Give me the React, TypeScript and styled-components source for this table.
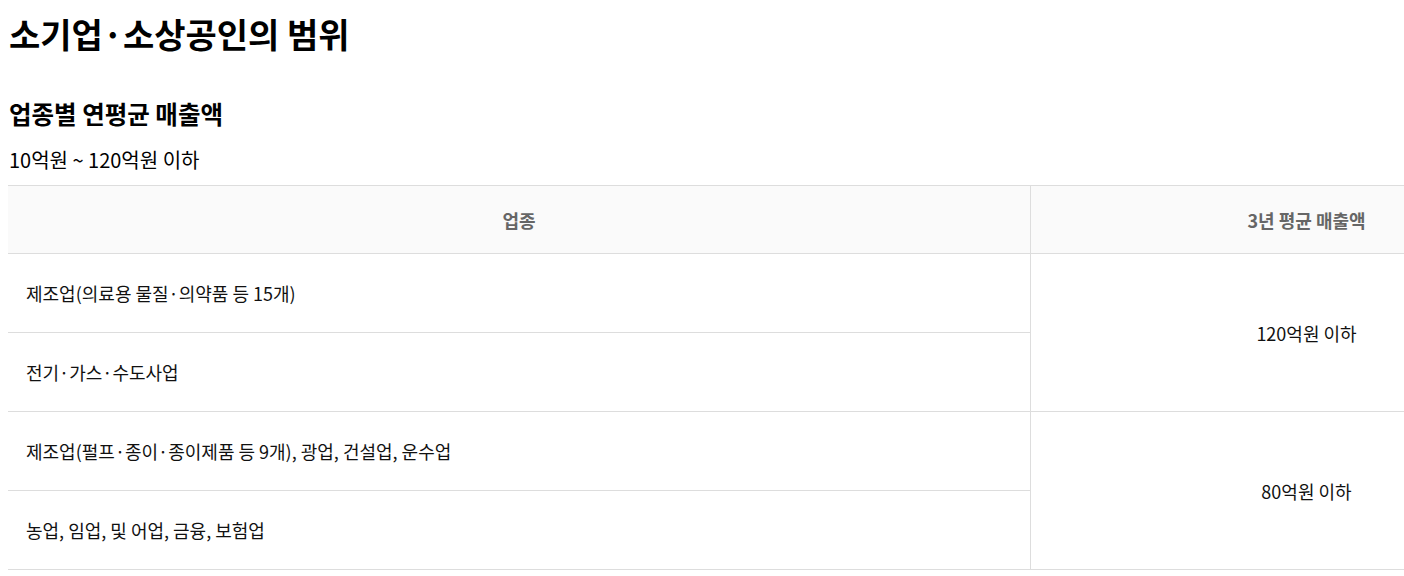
import React from "react";
import styled, { createGlobalStyle } from "styled-components";

const Global = createGlobalStyle`
  body {
    margin: 8px 0 8px 8px;
    font-family: "Noto Sans CJK KR", "Noto Sans", sans-serif;
    color: #000;
    background: #fff;
  }
`;

const Page = styled.div`
  overflow: hidden;
`;

const Title = styled.h1`
  margin: 2px 0 0 1px;
  font-size: 34px;
  line-height: 48px;
  font-weight: 700;
`;

const SubTitle = styled.h2`
  margin: 39px 0 0 1px;
  font-size: 24.5px;
  line-height: 33px;
  font-weight: 700;
`;

const Lead = styled.p`
  margin: 15px 0 0 1px;
  font-size: 20px;
  line-height: 30px;
`;

const TableWrap = styled.div`
  margin-top: 10px;
  overflow: hidden;
`;

const Table = styled.table`
  width: 1574px;
  border-collapse: collapse;
  table-layout: fixed;
  border-top: 1px solid #ddd;
`;

const Th = styled.th<{ $w?: number }>`
  width: ${(p) => (p.$w ? `${p.$w}px` : "auto")};
  height: 67px;
  padding: 0;
  background: #fafafa;
  color: #666;
  font-size: 18px;
  font-weight: 700;
  text-align: center;
  border-bottom: 1px solid #ddd;
  border-left: 1px solid #ddd;
  &:first-child { border-left: none; }
`;

const Td = styled.td<{ $center?: boolean }>`
  height: 78px;
  padding: ${(p) => (p.$center ? "0" : "0 0 0 18px")};
  font-size: 18px;
  color: #111;
  text-align: ${(p) => (p.$center ? "center" : "left")};
  border-bottom: 1px solid #ddd;
  border-left: 1px solid #ddd;
  &:first-child { border-left: none; }
`;

const rows = [
  { items: ["제조업(의료용 물질·의약품 등 15개)", "전기·가스·수도사업"], value: "120억원 이하" },
  { items: ["제조업(펄프·종이·종이제품 등 9개), 광업, 건설업, 운수업", "농업, 임업, 및 어업, 금융, 보험업"], value: "80억원 이하" },
];

export default function App() {
  return (
    <Page>
      <Global />
      <Title>소기업·소상공인의 범위</Title>
      <SubTitle>업종별 연평균 매출액</SubTitle>
      <Lead>10억원 ~ 120억원 이하</Lead>
      <TableWrap>
        <Table>
          <thead>
            <tr>
              <Th $w={1022}>업종</Th>
              <Th>3년 평균 매출액</Th>
            </tr>
          </thead>
          <tbody>
            {rows.map((g) =>
              g.items.map((it, i) => (
                <tr key={it}>
                  <Td>{it}</Td>
                  {i === 0 && (
                    <Td $center rowSpan={g.items.length}>
                      {g.value}
                    </Td>
                  )}
                </tr>
              ))
            )}
          </tbody>
        </Table>
      </TableWrap>
    </Page>
  );
}
